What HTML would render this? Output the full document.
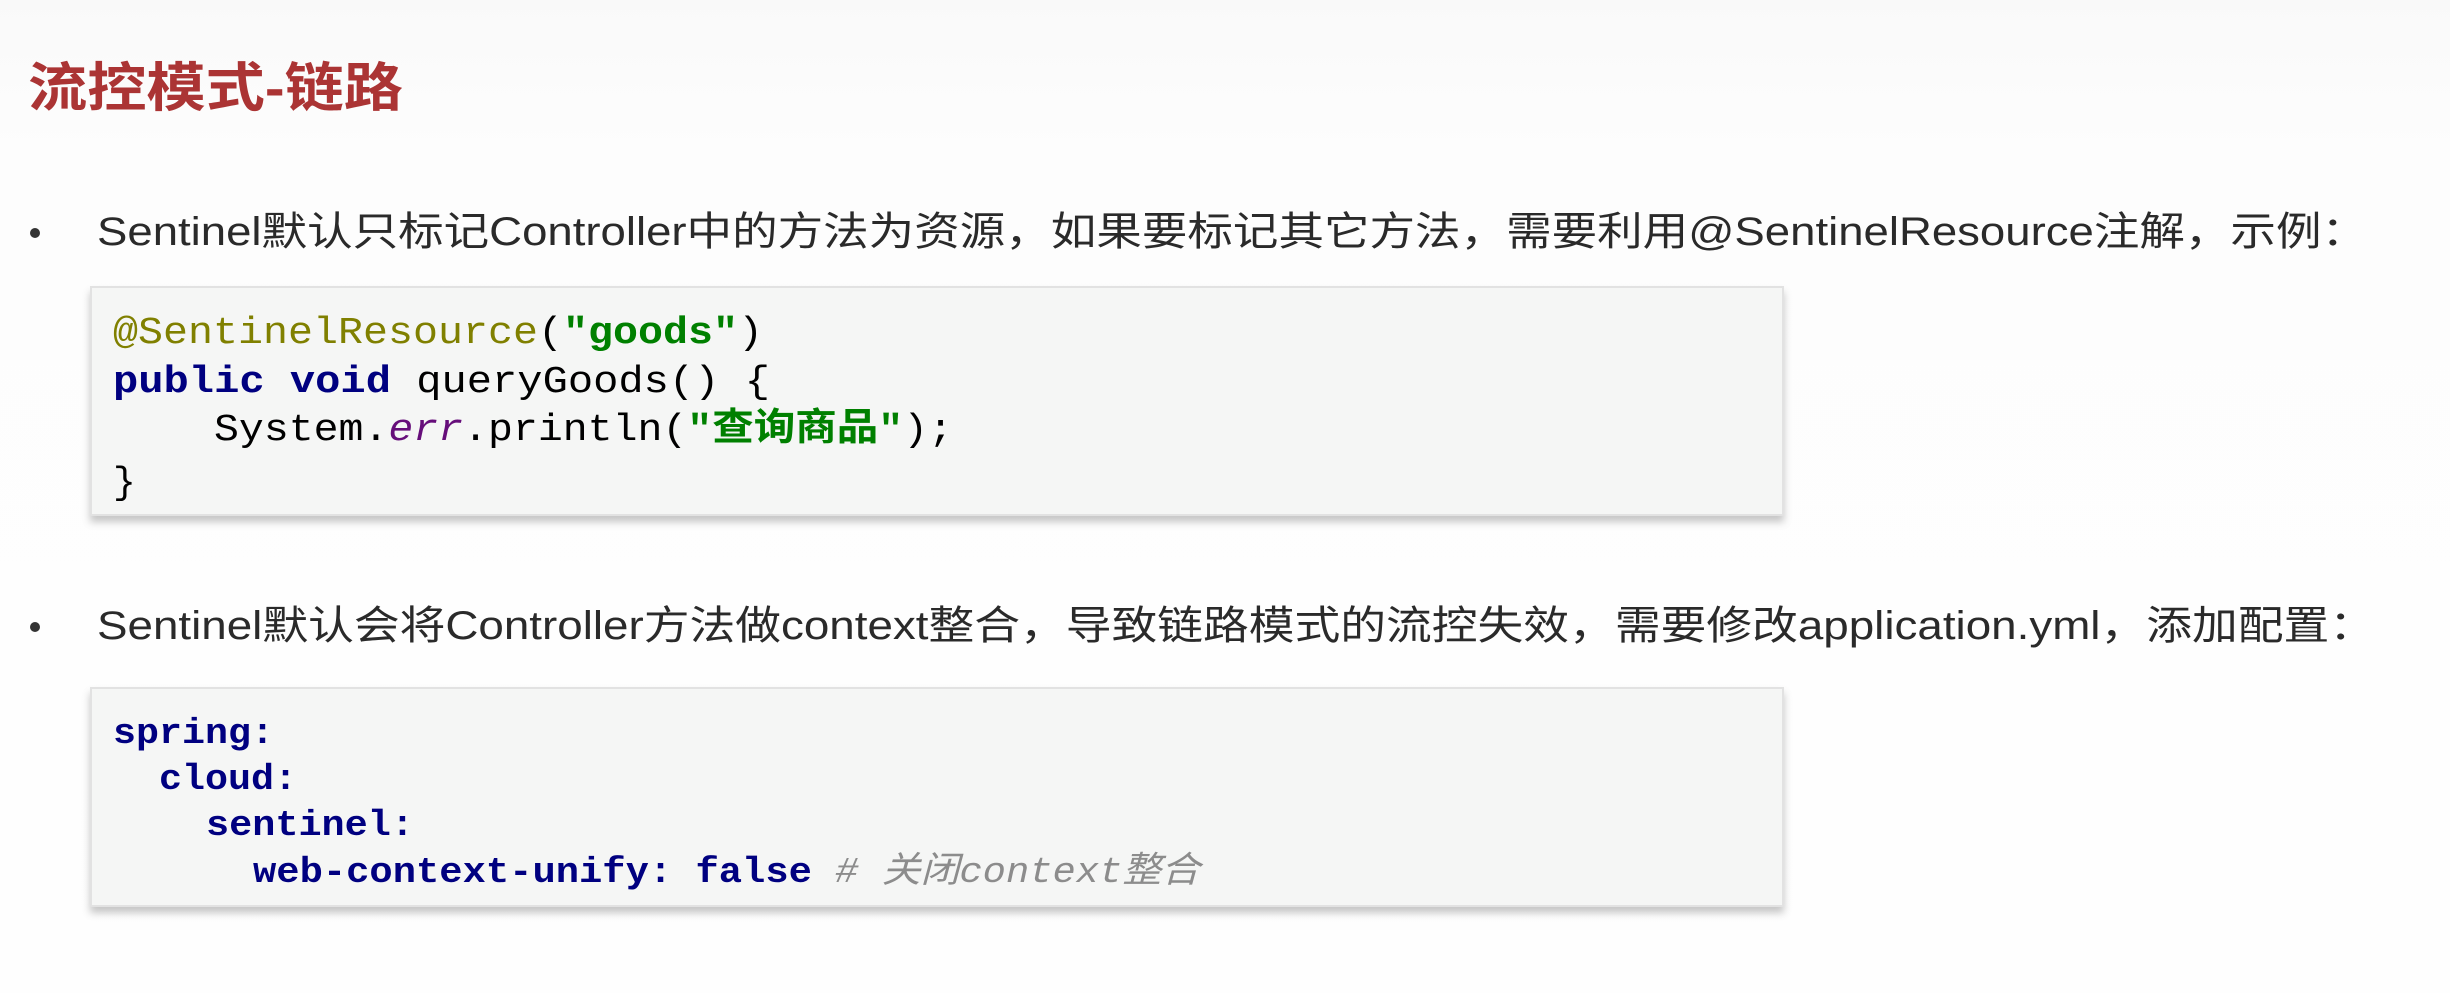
<!DOCTYPE html>
<html><head><meta charset="utf-8"><style>
html,body{margin:0;padding:0;background:#fdfdfd;}
svg{display:block;}
</style></head><body>
<svg width="2450" height="993" viewBox="0 0 2450 993" xmlns="http://www.w3.org/2000/svg">
<defs>
<linearGradient id="bg" x1="0" y1="0" x2="0" y2="1"><stop offset="0" stop-color="#f9f9f9"/><stop offset="0.15" stop-color="#fdfdfd"/><stop offset="1" stop-color="#fefefe"/></linearGradient>
<filter id="sh" x="-5%" y="-5%" width="110%" height="130%"><feDropShadow dx="0" dy="6" stdDeviation="4" flood-color="#000" flood-opacity="0.22"/></filter>
</defs>
<rect width="2450" height="993" fill="url(#bg)"/>
<text x="28" y="106" font-family="'Liberation Sans','Noto Sans CJK SC',sans-serif" font-weight="bold" font-size="53" fill="#ab3434" textLength="375" lengthAdjust="spacingAndGlyphs">流控模式-链路</text>

<circle cx="35" cy="233" r="5" fill="#333"/>
<text x="97" y="245" font-family="'Liberation Sans','Noto Sans CJK SC',sans-serif" font-size="40" fill="#2a2a2a" textLength="2270" lengthAdjust="spacingAndGlyphs">Sentinel默认只标记Controller中的方法为资源，如果要标记其它方法，需要利用@SentinelResource注解，示例：</text>

<rect x="91" y="287" width="1692" height="228" fill="#f5f6f5" stroke="#e2e2e2" stroke-width="2" filter="url(#sh)"/>
<g font-family="'Liberation Mono','Noto Sans CJK SC',monospace" font-size="38">
<text x="113" y="343" textLength="650" lengthAdjust="spacingAndGlyphs"><tspan fill="#808000">@SentinelResource</tspan><tspan fill="#000">(</tspan><tspan fill="#008000" font-weight="bold">"goods"</tspan><tspan fill="#000">)</tspan></text>
<text x="113" y="392" textLength="657" lengthAdjust="spacingAndGlyphs"><tspan fill="#000080" font-weight="bold">public void</tspan><tspan fill="#000"> queryGoods() {</tspan></text>
<text x="214" y="440" textLength="739" lengthAdjust="spacingAndGlyphs"><tspan fill="#000">System.</tspan><tspan fill="#660e7a" font-style="italic">err</tspan><tspan fill="#000">.println(</tspan><tspan fill="#008000" font-weight="bold">"查询商品"</tspan><tspan fill="#000">);</tspan></text>
<text x="113" y="493" fill="#000">}</text>
</g>

<circle cx="35" cy="627" r="5" fill="#333"/>
<text x="97" y="639" font-family="'Liberation Sans','Noto Sans CJK SC',sans-serif" font-size="40" fill="#2a2a2a" textLength="2278" lengthAdjust="spacingAndGlyphs">Sentinel默认会将Controller方法做context整合，导致链路模式的流控失效，需要修改application.yml，添加配置：</text>

<rect x="91" y="688" width="1692" height="218" fill="#f5f6f5" stroke="#e2e2e2" stroke-width="2" filter="url(#sh)"/>
<g font-family="'Liberation Mono','Noto Sans CJK SC',monospace" font-size="36" font-weight="bold" fill="#000080">
<text x="113" y="743" textLength="161" lengthAdjust="spacingAndGlyphs">spring:</text>
<text x="159" y="789" textLength="138" lengthAdjust="spacingAndGlyphs">cloud:</text>
<text x="206" y="835" textLength="208" lengthAdjust="spacingAndGlyphs">sentinel:</text>
<text x="253" y="882" textLength="947" lengthAdjust="spacingAndGlyphs">web-context-unify: false<tspan fill="#8c8c8c" font-weight="normal" font-style="italic"> # 关闭context整合</tspan></text>
</g>
</svg>
</body></html>
